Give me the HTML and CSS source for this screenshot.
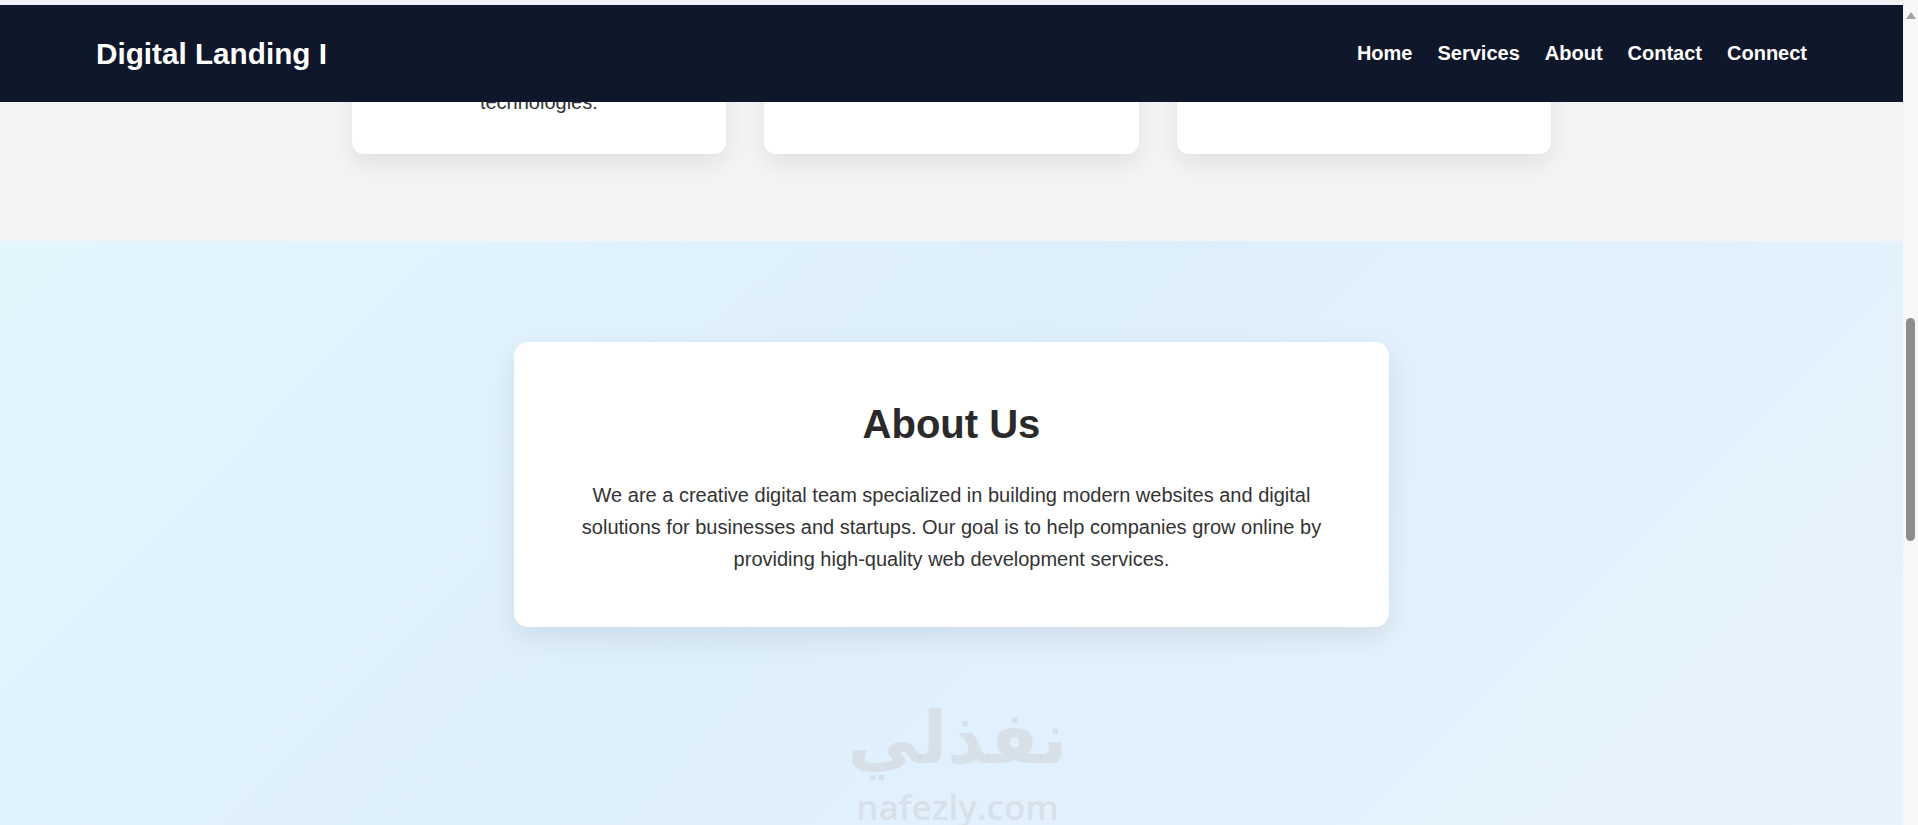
FILE: index.html
```html
<!DOCTYPE html>
<html lang="en">
<head>
<meta charset="utf-8">
<title>Digital Landing</title>
<link rel="stylesheet" href="styles.css">
</head>
<body>
<div class="screen">
  <div class="viewport">
    <header class="topbar">
      <div class="logo">Digital Landing I</div>
      <nav class="nav">
        <a href="#home">Home</a>
        <a href="#services">Services</a>
        <a href="#about">About</a>
        <a href="#contact">Contact</a>
        <a href="#connect">Connect</a>
      </nav>
    </header>
    <main class="page">
      <section class="services" id="services">
        <div class="cards">
          <div class="card">
            <div class="card-icon"></div>
            <p>Fast and responsive websites built with the latest web<br>technologies.</p>
          </div>
          <div class="card">
            <div class="card-icon"></div>
            <p>Clean and modern interfaces.</p>
          </div>
          <div class="card">
            <div class="card-icon"></div>
            <p>Better ranking on search.</p>
          </div>
        </div>
      </section>
      <section class="about" id="about">
        <div class="about-card">
          <h2>About Us</h2>
          <p>We are a creative digital team specialized in building modern websites and digital solutions for businesses and startups. Our goal is to help companies grow online by providing high-quality web development services.</p>
        </div>
      </section>
    </main>
    <div class="watermark">
      <span class="wm-ar">نفذلي</span>
      <span class="wm-en">nafezly.com</span>
    </div>
  </div>
  <div class="scrollbar">
    <span class="arrow-up"></span>
    <span class="thumb"></span>
  </div>
</div>
</body>
</html>
```
FILE: styles.css
```css
html, body {
  margin: 0;
  height: 100%;
  overflow: hidden;
}
body {
  font-family: "Liberation Sans", Arial, sans-serif;
  background: #f3f4f6;
}
.screen {
  display: flex;
  height: 825px;
  overflow: hidden;
}
.viewport {
  flex: 1;
  position: relative;
  overflow: hidden;
  background: #f3f4f6;
}
.topbar {
  position: absolute;
  top: 0;
  left: 0;
  right: 0;
  height: 102px;
  box-sizing: border-box;
  padding: 0 96px;
  border-top: 5px solid #eff1f4;
  background: #0f172a;
  display: flex;
  align-items: center;
  justify-content: space-between;
  z-index: 10;
}
.logo {
  color: #fff;
  font-weight: 700;
  font-size: 29.7px;
}
.nav {
  display: flex;
  gap: 25px;
}
.nav a {
  color: #fff;
  font-weight: 700;
  font-size: 20px;
  text-decoration: none;
}
.page {
  margin-top: -78px;
}
.services {
  padding: 0 20px 87px;
  background: #f3f4f6;
}
.cards {
  display: grid;
  grid-template-columns: repeat(3, 1fr);
  gap: 38px;
  max-width: 1200px;
  margin: 0 auto;
}
.card {
  background: #fff;
  border-radius: 12px;
  padding: 20px 30px 36px;
  text-align: center;
  box-shadow: 0 10px 25px rgba(0, 0, 0, 0.08);
}
.card-icon {
  width: 60px;
  height: 60px;
  margin: 0 auto 20px;
  border-radius: 50%;
  background: #e0f2fe;
}
.card p {
  margin: 0;
  font-size: 20px;
  line-height: 32px;
  color: #333;
}
.about {
  padding: 101px 20px 200px;
  background: linear-gradient(135deg, #e3f6fe 0%, #deeffc 45%, #e8f4fd 100%);
}
.about-card {
  max-width: 875px;
  box-sizing: border-box;
  margin: 0 auto;
  padding: 59px 60px 52px;
  background: #fff;
  border-radius: 14px;
  text-align: center;
  box-shadow: 0 10px 30px rgba(0, 0, 0, 0.09);
}
.about-card h2 {
  margin: 0 0 32px;
  font-size: 40px;
  line-height: 46px;
  color: #2a2a2a;
}
.about-card p {
  margin: 0;
  font-size: 20px;
  line-height: 32px;
  color: #333;
}
.watermark {
  position: absolute;
  left: 0;
  right: 0;
  top: 694px;
  display: flex;
  flex-direction: column;
  align-items: center;
  padding-left: 12px;
  color: rgba(208, 211, 215, 0.55);
  pointer-events: none;
}
.wm-ar {
  font-family: "DejaVu Sans", sans-serif;
  font-weight: 700;
  font-size: 72px;
  line-height: 88px;
}
.wm-en {
  margin-top: 10px;
  font-family: "Open Sans", sans-serif;
  font-weight: 600;
  font-size: 35px;
  line-height: 30px;
}
.scrollbar {
  width: 15px;
  background: #f7f7f7;
  display: flex;
  flex-direction: column;
  align-items: center;
}
.arrow-up {
  margin-top: 12px;
  width: 0;
  height: 0;
  border-left: 5px solid transparent;
  border-right: 5px solid transparent;
  border-bottom: 7px solid #a3a3a3;
}
.thumb {
  margin-top: 299px;
  width: 9px;
  height: 223px;
  border-radius: 5px;
  background: #8d8d8d;
}
```
